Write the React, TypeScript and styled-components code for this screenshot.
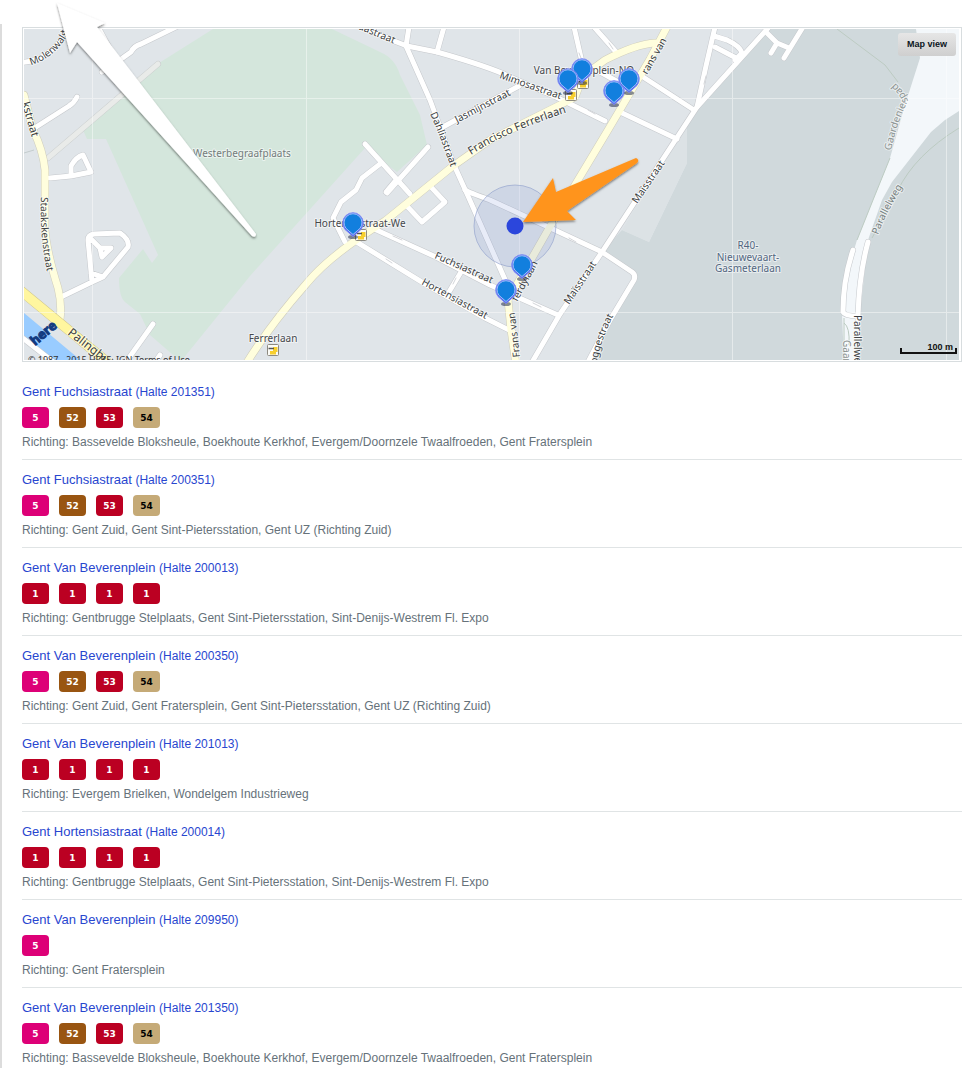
import React from "react";
import styled, { createGlobalStyle } from "styled-components";

const GlobalStyle = createGlobalStyle`
  body {
    margin: 0;
    background: #fff;
    font-family: "Liberation Sans", Arial, sans-serif;
  }
  * { box-sizing: border-box; }
`;

const Page = styled.div`
  padding-top: 24px;
`;

const Panel = styled.main`
  min-height: calc(100vh - 24px);
  padding: 3px 3px 0 20px;
  border-left: 2px solid #dcdcdc;
`;

const MapFrame = styled.section`
  position: relative;
  height: 335px;
  padding: 1px 2px 1px 1px;
  border: 1px solid #d8dddf;
`;

const MapDrawing = styled.svg`
  display: block;
  width: 100%;
  height: 331px;
  font-family: "Noto Sans", "Open Sans", sans-serif;
`;

const Annotations = styled.svg`
  position: absolute;
  top: -28px;
  left: -23px;
  pointer-events: none;
`;

const MapViewButton = styled.button`
  position: absolute;
  top: 5px;
  right: 5px;
  width: 58px;
  height: 23px;
  padding: 0;
  border: 0;
  border-radius: 3px;
  background: linear-gradient(#e6e6e6, #cfcfcf);
  color: #0b1522;
  font: bold 9px/23px "Liberation Sans", Arial, sans-serif;
`;

const StopList = styled.ul`
  margin: 10px 0 0;
  padding: 0;
  list-style: none;
`;

const StopRow = styled.li`
  padding: 12px 0 9px;
  border-bottom: 1px solid #e0e4e5;

  &:last-child {
    padding-bottom: 0;
    border-bottom: 0;
  }
`;

const StopLink = styled.a`
  display: block;
  width: fit-content;
  color: #2846cf;
  font-size: 13px;
  line-height: 16px;
  text-decoration: none;
`;

const StopCode = styled.span`
  font-size: 12px;
`;

const Lines = styled.div`
  display: flex;
  gap: 10px;
  margin: 7px 0 6px;
`;

const LineBadge = styled.span<{ $bg: string; $fg: string }>`
  width: 27px;
  height: 21px;
  border-radius: 4px;
  background: ${(p) => p.$bg};
  color: ${(p) => p.$fg};
  font: bold 9px/22px "DejaVu Sans", Verdana, sans-serif;
  text-align: center;
`;

const Direction = styled.p`
  margin: 0;
  color: #66727a;
  font-size: 12px;
  line-height: 16px;
`;

const LINE_COLORS: Record<string, [string, string]> = {
  "1": ["#bb0022", "#fff"],
  "5": ["#dd0077", "#fff"],
  "52": ["#995511", "#fff"],
  "53": ["#bb0022", "#fff"],
  "54": ["#c5aa77", "#000"],
};

const FOUR = ["5", "52", "53", "54"];
const ONES = ["1", "1", "1", "1"];

const STOPS = [
  { name: "Gent Fuchsiastraat", code: "201351", lines: FOUR, to: "Bassevelde Bloksheule, Boekhoute Kerkhof, Evergem/Doornzele Twaalfroeden, Gent Fratersplein" },
  { name: "Gent Fuchsiastraat", code: "200351", lines: FOUR, to: "Gent Zuid, Gent Sint-Pietersstation, Gent UZ (Richting Zuid)" },
  { name: "Gent Van Beverenplein", code: "200013", lines: ONES, to: "Gentbrugge Stelplaats, Gent Sint-Pietersstation, Sint-Denijs-Westrem Fl. Expo" },
  { name: "Gent Van Beverenplein", code: "200350", lines: FOUR, to: "Gent Zuid, Gent Fratersplein, Gent Sint-Pietersstation, Gent UZ (Richting Zuid)" },
  { name: "Gent Van Beverenplein", code: "201013", lines: ONES, to: "Evergem Brielken, Wondelgem Industrieweg" },
  { name: "Gent Hortensiastraat", code: "200014", lines: ONES, to: "Gentbrugge Stelplaats, Gent Sint-Pietersstation, Sint-Denijs-Westrem Fl. Expo" },
  { name: "Gent Van Beverenplein", code: "209950", lines: ["5"], to: "Gent Fratersplein" },
  { name: "Gent Van Beverenplein", code: "201350", lines: FOUR, to: "Bassevelde Bloksheule, Boekhoute Kerkhof, Evergem/Doornzele Twaalfroeden, Gent Fratersplein" },
];

const STREETS = [
  "M20 63L32 61Q55 54 68 28",
  "M98 27L117 62",
  "M102 72L117 62L131 52Q134 46 141 44L178 26",
  "M77 97Q74 103 69 106L33 129",
  "M50 178L71 176L91 172L83 155Q76 157 71 166V176",
  "M61 297L92 282L88 240Q88 235 94 234L120 233Q130 240 128 247L103 277L91 273M103 277L92 282M90 238L100 248L111 248L102 257L100 248",
  "M20 336L52 361",
  "M153 324L126 362M160 355L154 364",
  "M360 25L394 41L407 46L437 52Q490 67 508 76L556 97L605 121",
  "M409 27L406 46L430 100L454 165L468 196L507 284",
  "M444 27L437 52",
  "M441 128L480 107L519 86",
  "M574 27L582 62L620 83M594 27L617 53",
  "M640 75L694 110M620 112L677 139",
  "M715 27L706 66L697 107",
  "M714 36L727 40Q740 46 742 53L735 60M715 47L738 59",
  "M769 27L697 107L602 252L560 314L531 364",
  "M766 32L777 43L771 53M777 43L789 48M803 27L784 58",
  "M365 144L410 194M428 147L387 193M396 180L386 192M380 164L362 178L356 190L341 202L333 218L345 242",
  "M405 204L422 222L445 202L430 186",
  "M372 228L436 257L490 285L558 315",
  "M355 241L425 284L485 318L513 332M461 272L449 292",
  "M465 190Q468 192 490 200L602 252L632 272Q636 275 634 280L610 320L588 362",
];

const AVENUES = [
  "M24 95L33 130Q43 150 45 170V230Q47 253 58 288Q62 304 60 320",
  "M246 364Q270 325 307 283Q330 255 385 221L453 166L490 140L560 105L575 97L583 76L605 60Q636 44 655 43",
  "M668 25L650 59L608 130L548 230L508 300L511 330L516 364",
];

type Label = { d: string; text: string; size?: number; color?: string };

const ROAD_LABELS: Label[] = [
  { d: "M31 65Q55 58 68 34V0", text: "Molenwalstraat" },
  { d: "M22 103L34 145", text: "kstraat", size: 11 },
  { d: "M41 197Q39 240 50 285", text: "Staakskenstraat" },
  { d: "M67 334L122 377", text: "Palinghuizen", size: 12 },
  { d: "M358 29L402 47", text: "aastraat" },
  { d: "M430 114Q440 136 451 168", text: "Dahliastraat" },
  { d: "M457 123L513 94", text: "Jasmijnstraat" },
  { d: "M499 78L565 101", text: "Mimosastraat" },
  { d: "M471 155Q505 132 574 110", text: "Francisco Ferrerlaan", size: 11 },
  { d: "M647 75L674 28", text: "rans van" },
  { d: "M637 204L670 156", text: "Maïsstraat" },
  { d: "M569 305L602 256", text: "Maïsstraat" },
  { d: "M434 258L497 286", text: "Fuchsiastraat" },
  { d: "M421 284L493 323", text: "Hortensiastraat" },
  { d: "M597 364Q600 338 620 304", text: "oggestraat" },
  { d: "M520 357Q517 325 511 290", text: "Frans van" },
  { d: "M517 302L544 252", text: "ferdylaan" },
  { d: "M891 151Q897 122 908 101Q904 90 892 80", text: "Gaardenierspad", color: "#8b9291" },
  { d: "M878 235Q887 210 907 180", text: "Parallelweg", color: "#777f80" },
  { d: "M854 315V375", text: "Parallelweg" },
  { d: "M843 340V385", text: "Gaardenier", color: "#8b9291" },
];

const PINS = [[582, 69], [568, 79], [614, 91], [629, 79], [353, 223], [522, 265], [506, 290]];
const BUS_STOPS = [[571, 95], [583, 83], [361, 235], [273, 350]];

const Pin = ({ x, y }: { x: number; y: number }) => (
  <g transform={`translate(${x} ${y})`}>
    <ellipse cx="0" cy="14" rx="5" ry="2" fill="#222b4a" opacity=".55" />
    <path d="M0 13.5L-8 6.5A10.3 10.3 0 1 1 8 6.500Z" fill="#5064ee" stroke="#7d8cf4" strokeWidth="1" strokeLinejoin="round" />
    <path d="M0 11.5L-7 5.4A9 9 0 1 1 7 5.400Z" fill="#127fde" stroke="#9fc0fb" strokeWidth="1" strokeLinejoin="round" />
  </g>
);

const BusStop = ({ x, y }: { x: number; y: number }) => (
  <g transform={`translate(${x} ${y})`}>
    <rect x="-5.5" y="-5.5" width="11" height="11" rx="1" fill="#fbfbf6" stroke="#8d8a80" />
    <path d="M-3 4.500V1H0V-3H4.500V2H3V4.500Z" fill="#f7cf2e" />
    <path d="M-4.500-1.500H1" stroke="#555" strokeWidth="1.5" />
  </g>
);

const StopsMap = () => (
  <MapDrawing viewBox="24 29 935 331" preserveAspectRatio="xMinYMin slice" role="img" aria-label="Map of nearby stops">
    <rect x="24" y="29" width="935" height="331" fill="#e0e5e9" />
    <path d="M213 29L159 63L133 84L83 130L87 139H106L158 255L152 263L143 249L119 278Q119 297 125 302L140 314L150 335L172 354L182 360L250 276L365 148L397 172L427 145L420 115L400 75Q395 58 380 52L332 29Z" fill="#d4e6dc" />
    <path d="M769 29L697 107L687 122V163L649 242L622 230L602 252L637 276L590 360H959V29Z" fill="#d0d9dc" />
    <path d="M640 200L687 122V163L649 242L622 230Z" fill="#dce2e5" />
    <path d="M916 29L920 58L905 105L890 158L873 200L857 240L848 270L842 314L844 360H860V314L868 240L882 200L892 182L931 132L945 120L959 111V29Z" fill="#f3f7fa" />
    <path d="M837 29L885 65L898 82M890 158L873 200L857 240M959 128Q915 155 898 190L872 238M844 318V360M844 323Q850 327 849 345" fill="none" stroke="#bccbc2" strokeWidth="1" />
    <path d="M24 313L84 363H56L24 336Z" fill="#99ccff" />
    <path d="M24 153L34 150" stroke="#c4cccd" />
    <path d="M158 64L48 158" stroke="#c9cdcd" strokeWidth="6" strokeLinecap="round" />
    <path d="M158 64L48 158" stroke="#e9ebe9" strokeWidth="5" strokeLinecap="round" />
    <g fill="none" strokeLinecap="round" strokeLinejoin="round">
      <g stroke="#c5c8cc" strokeWidth="6">
        {STREETS.map((d) => <path key={d} d={d} />)}
        <path d="M853 250Q843 280 843 312Q845 316 857 316M868 242Q859 275 858 316V326" />
      </g>
      <g stroke="#cfcdbb" strokeWidth="8">
        {AVENUES.map((d) => <path key={d} d={d} />)}
      </g>
      <g stroke="#fff" strokeWidth="5">
        {STREETS.map((d) => <path key={d} d={d} />)}
        <path d="M853 250Q843 280 843 312Q845 316 857 316M868 242Q859 275 858 316V326" />
      </g>
      <g stroke="#fffedd" strokeWidth="7">
        {AVENUES.map((d) => <path key={d} d={d} />)}
      </g>
      <path d="M20 290L112 366" stroke="#cfc68f" strokeWidth="10" />
      <path d="M20 290L112 366" stroke="#fff69f" strokeWidth="9" />
      <g stroke="#d3d5d9" strokeWidth="1">
        <path d="M393 236L402 240M386 259L392 263M453 284L456 278M569 238L576 242M533 303L541 307M588 110L595 114M579 53L581 58M609 43L613 49M704 84L706 76" />
      </g>
    </g>
    <path d="M92.5 29V360M306.5 29V360M519.5 29V360M732.5 29V360M946.5 29V360M24 98.500H959M24 312.500H959" stroke="#fff" opacity=".45" />
    <circle cx="515" cy="226" r="41" fill="#7890d8" fillOpacity=".17" stroke="#8c9dca" strokeOpacity=".6" />
    <defs>
      {ROAD_LABELS.map((l, i) => <path key={i} id={`road-${i}`} d={l.d} />)}
    </defs>
    <g stroke="#fff" strokeOpacity=".55" strokeWidth="2" paintOrder="stroke" strokeLinejoin="round">
      {ROAD_LABELS.map((l, i) => (
        <text key={i} fontSize={l.size ?? 10} fill={l.color ?? "#3c3f42"}>
          <textPath href={`#road-${i}`}>{l.text}</textPath>
        </text>
      ))}
      <g fontSize="10" fill="#45484c" textAnchor="middle">
        <text x="242" y="157" fill="#737b7c">Westerbegraafplaats</text>
        <text x="360" y="227">Hortensiastraat-We</text>
        <text x="584" y="74">Van Beverenplein-NO</text>
        <text x="273" y="342">Ferrerlaan</text>
        <g fill="#536781">
          <text x="748" y="249">R40-</text>
          <text x="748" y="261">Nieuwevaart-</text>
          <text x="748" y="272">Gasmeterlaan</text>
        </g>
      </g>
    </g>
    <text x="28" y="363" fontSize="9" fill="#333">© 1987 - 2015 HERE, IGN Terms of Use</text>
    <text transform="translate(35 346) rotate(-40)" fontSize="13" fontWeight="bold" fill="#123a80" stroke="#123a80" strokeWidth="1">here</text>
    {BUS_STOPS.map(([x, y]) => <BusStop key={x} x={x} y={y} />)}
    {PINS.map(([x, y]) => <Pin key={x} x={x} y={y} />)}
    <circle cx="515" cy="226" r="8.500" fill="#2b46dc" />
    <path d="M901 348V353H956V348" fill="none" stroke="#111" strokeWidth="2" />
    <text x="953" y="350" fontSize="9" fontWeight="bold" fontFamily="Liberation Sans" textAnchor="end" fill="#111">100 m</text>
  </MapDrawing>
);

const Arrows = () => (
  <Annotations width="680" height="260" viewBox="0 0 680 260" aria-hidden="true">
    <defs>
      <filter id="arrow-shadow" x="-10%" y="-10%" width="120%" height="120%">
        <feDropShadow dx="0" dy="1.5" stdDeviation="1.2" floodColor="#000" floodOpacity=".5" />
      </filter>
    </defs>
    <path d="M57 3L70 53L77 42L252 236Q256 238 256 234L97 27L105 23Z" fill="#fff" filter="url(#arrow-shadow)" />
    <path d="M523 222L553 178L556 192L636 158Q640 160 637 163L567 211L576 220Z" fill="#ff941f" filter="url(#arrow-shadow)" />
  </Annotations>
);

export default function App() {
  return (
    <Page>
      <GlobalStyle />
      <Panel>
        <MapFrame>
          <StopsMap />
          <Arrows />
          <MapViewButton type="button">Map view</MapViewButton>
        </MapFrame>
        <StopList>
          {STOPS.map((stop) => (
            <StopRow key={stop.code}>
              <StopLink href="#">
                {stop.name} <StopCode>(Halte {stop.code})</StopCode>
              </StopLink>
              <Lines>
                {stop.lines.map((line, i) => (
                  <LineBadge key={i} $bg={LINE_COLORS[line][0]} $fg={LINE_COLORS[line][1]}>{line}</LineBadge>
                ))}
              </Lines>
              <Direction>Richting: {stop.to}</Direction>
            </StopRow>
          ))}
        </StopList>
      </Panel>
    </Page>
  );
}
